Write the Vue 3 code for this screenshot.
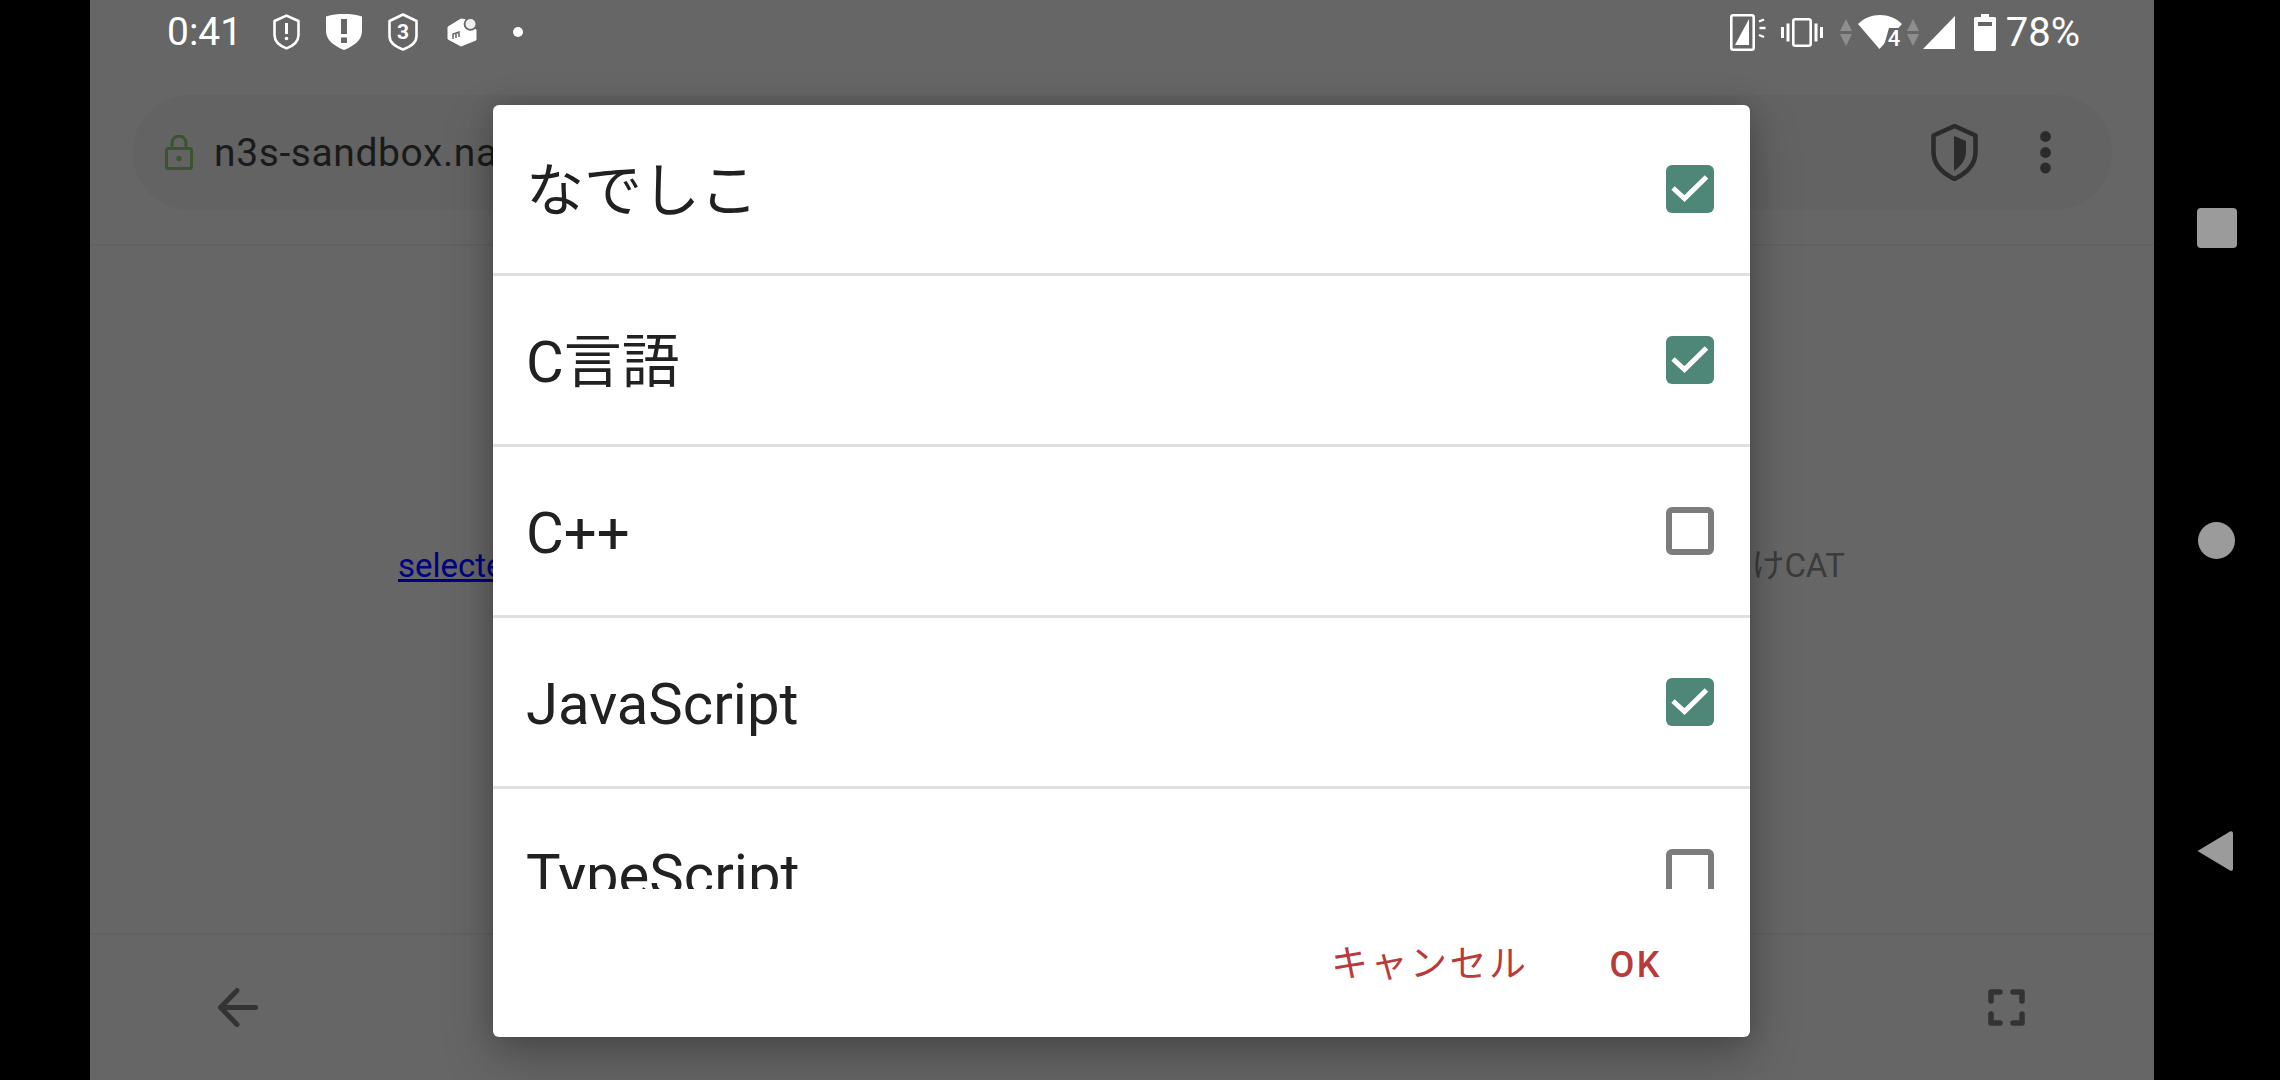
<template>
  <div class="device">
    <div class="screen">
      <header class="top">
        <div class="status">
          <span class="clock">0:41</span>
          <svg class="ic-time" width="27" height="36" viewBox="0 0 27 36">
            <path d="M13.5 1.6 25.5 7v14c0 6.5-5.2 10.8-12 13.4C6.700 31.800 1.500 27.500 1.500 21V7z" fill="none" stroke="#fff" stroke-width="2.600" stroke-linejoin="round" />
            <path d="M13.500 9v11" stroke="#fff" stroke-width="3" />
            <circle cx="13.500" cy="24.500" r="1.800" fill="#fff" />
          </svg>
          <svg width="36" height="36" viewBox="0 0 36 36">
            <path d="M0 2.500C6 .5 12 0 18 0s12 .5 18 2.500V17C36 26 28 32 18 36 8 32 0 26 0 17z" fill="#fff" />
            <path d="M15 5h6v15h-6zM15 23.500h6V29h-6z" fill="#666" />
          </svg>
          <svg width="30" height="38" viewBox="0 0 30 38">
            <path d="M15 1.500 28.500 8v15c0 6.500-6 10.800-13.500 13.500C7.500 33.800 1.500 29.500 1.500 23V8z" fill="none" stroke="#fff" stroke-width="2.600" stroke-linejoin="round" />
            <text x="15" y="26" text-anchor="middle" class="shield-num">3</text>
          </svg>
          <svg class="ic-merc" width="31" height="29" viewBox="0 0 31 29">
            <path d="M14 1 1 9v12l13 7 15-6V12L20 2z" fill="#fff" stroke="#fff" stroke-linejoin="round" />
            <circle cx="23.500" cy="6" r="6.800" fill="#666" />
            <circle cx="23.500" cy="6" r="5" fill="#eee" />
            <path d="M6 21v-5l3-1v5M9 15l3-1v5" fill="none" stroke="#666" stroke-width="1.500" />
          </svg>
          <span class="dot"></span>

          <div class="status-right">
            <svg width="38" height="37" viewBox="0 0 38 37">
              <rect x="1.300" y="1.300" width="22.400" height="34.400" rx="2" fill="none" stroke="#fff" stroke-width="2.600" />
              <path d="M19 5v26H5z" fill="#fff" />
              <path d="M29 7.500l5-2M29.500 14h6M29 21l5 2" stroke="#fff" stroke-width="2.400" fill="none" />
            </svg>
            <svg class="ic-vib" width="42" height="29" viewBox="0 0 42 29">
              <rect x="12.300" y="1.300" width="17.400" height="26.400" rx="2" fill="none" stroke="#fff" stroke-width="2.600" />
              <path d="M1.500 9v11M7 5.500v18M35 5.500v18M40.500 9v11" stroke="#fff" stroke-width="3" />
            </svg>
            <svg class="ic-arrows" width="12" height="27" viewBox="0 0 12 27">
              <path d="M6 0l6 12H0zM0 15h12L6 27z" fill="#8e8e8e" />
            </svg>
            <svg class="ic-wifi" width="44" height="34" viewBox="0 0 44 34">
              <path d="M0 9C6 3 14 0 22 0s16 3 22 9L21.500 34z" fill="#fff" />
              <path d="M31 13h13v21H25z" fill="#666" />
              <text x="36" y="31" text-anchor="middle" class="wifi-num">4</text>
            </svg>
            <svg class="ic-arrows" width="12" height="27" viewBox="0 0 12 27">
              <path d="M6 0l6 12H0zM0 15h12L6 27z" fill="#8e8e8e" />
            </svg>
            <svg class="ic-signal" width="32" height="33" viewBox="0 0 32 33">
              <path d="M32 0v33H0z" fill="#fff" />
            </svg>
            <svg class="ic-batt" width="22" height="37" viewBox="0 0 22 37">
              <path d="M7 0h8v3h5.500c.8 0 1.500.7 1.500 1.500V35.500c0 .8-.7 1.500-1.500 1.500H1.500C.7 37 0 36.300 0 35.500V4.500C0 3.700.7 3 1.500 3H7z" fill="#fff" />
              <path d="M4 8h14v4H4z" fill="#666" />
            </svg>
            <span class="percent">78%</span>
          </div>
        </div>

        <div class="address">
          <svg width="28" height="35" viewBox="0 0 28 35">
            <rect x="1.500" y="13.500" width="25" height="20" rx="2" fill="none" stroke="#3a552c" stroke-width="3" />
            <path d="M7 13V8a7 7 0 0 1 14 0v5" fill="none" stroke="#3a552c" stroke-width="3" />
            <circle cx="14" cy="23.500" r="2.700" fill="#3a552c" />
          </svg>
          <span class="url">n3s-sandbox.nadesi.com</span>
          <svg class="ic-shield" width="47" height="57" viewBox="0 0 47 57">
            <path d="M23.500 2 44.500 11.500V28c0 12-8.500 21-21 27C11 49 2.500 40 2.500 28V11.500z" fill="none" stroke="#2b2b2b" stroke-width="4.500" stroke-linejoin="round" />
            <path d="M23 12 35 17v10c0 9-5 15-12 20z" fill="#2b2b2b" />
          </svg>
          <svg width="11" height="43" viewBox="0 0 11 43">
            <circle cx="5.500" cy="5.500" r="5.400" fill="#2b2b2b" />
            <circle cx="5.500" cy="21.500" r="5.400" fill="#2b2b2b" />
            <circle cx="5.500" cy="37" r="5.400" fill="#2b2b2b" />
          </svg>
        </div>
      </header>

      <main class="content">
        <a class="link">selected</a>
        <span class="result">だけCAT</span>
      </main>

      <footer class="bottom">
        <svg width="40" height="39" viewBox="0 0 40 39">
          <path d="M37.500 19.500H3M19 2.500 2.500 19.500 19 36.500" fill="none" stroke="#333" stroke-width="5" stroke-linecap="round" stroke-linejoin="round" />
        </svg>
        <svg width="37" height="37" viewBox="0 0 37 37">
          <path d="M3 12V3h9M25 3h9v9M34 25v9h-9M12 34H3v-9" fill="none" stroke="#333" stroke-width="5.500" stroke-linecap="round" stroke-linejoin="round" />
        </svg>
      </footer>

      <section class="dialog">
        <div class="list">
          <div v-for="item in items" :key="item.name" class="row">
            <span class="label">{{ item.name }}</span>
            <span class="box" :class="{ checked: item.checked }">
              <svg v-if="item.checked" width="38" height="30" viewBox="0 0 38 30">
                <path d="M2 14 13.500 24.500 35.500 3" fill="none" stroke="#fff" stroke-width="5" />
              </svg>
            </span>
          </div>
        </div>
        <div class="actions">
          <button class="action cancel">キャンセル</button>
          <button class="action">OK</button>
        </div>
      </section>
    </div>

    <nav class="nav">
      <span class="nav-square"></span>
      <span class="nav-circle"></span>
      <svg width="37" height="42" viewBox="0 0 37 42">
        <path d="M1.500 21 34 1.500c1.500-.8 3 0 3 1.800v35.400c0 1.800-1.500 2.600-3 1.800z" fill="#9b9b9b" />
      </svg>
    </nav>
  </div>
</template>

<script setup>
const items = [
  { name: 'なでしこ', checked: true },
  { name: 'C言語', checked: true },
  { name: 'C++', checked: false },
  { name: 'JavaScript', checked: true },
  { name: 'TypeScript', checked: false },
]
</script>

<style>
body {
  background: #000;
}
</style>

<style scoped>
.device {
  width: 2280px;
  height: 1080px;
  display: flex;
  background: #000;
  padding-left: 90px;
  box-sizing: border-box;
  font-family: Roboto, "Noto Sans CJK JP", sans-serif;
  overflow: hidden;
}

.screen {
  position: relative;
  width: 2064px;
  display: flex;
  flex-direction: column;
  background: #666;
}

.top {
  height: 246px;
  box-sizing: border-box;
  border-bottom: 2px solid #616161;
}

.status {
  height: 64px;
  display: flex;
  align-items: center;
  gap: 26px;
  padding: 0 75px 0 77px;
  color: #fff;
}

.clock {
  font-size: 39px;
  margin-right: 5px;
}

.ic-merc {
  margin-left: 3px;
}

.dot {
  width: 10px;
  height: 10px;
  border-radius: 50%;
  background: #fff;
  margin-left: 9px;
}

.shield-num {
  font: 700 21px Roboto, sans-serif;
  fill: #fff;
}

.wifi-num {
  font: 500 22px Roboto, sans-serif;
  fill: #fff;
}

.status-right {
  margin-left: auto;
  display: flex;
  align-items: center;
}

.ic-vib {
  margin-left: 13px;
}

.ic-arrows {
  margin-left: 17px;
}

.ic-wifi {
  margin-left: 6px;
}

.ic-wifi + .ic-arrows {
  margin-left: 5px;
}

.ic-signal {
  margin-left: 4px;
}

.ic-batt {
  margin-left: 19px;
}

.percent {
  font-size: 40px;
  margin-left: 10px;
  margin-right: -1px;
}

.address {
  height: 115px;
  margin: 31px 42px 0 43px;
  padding: 0 61px 0 32px;
  display: flex;
  align-items: center;
  background: #636363;
  border-radius: 58px;
}

.url {
  margin-left: 21px;
  font-size: 39px;
  letter-spacing: 0.6px;
  color: #1a1a1a;
}

.ic-shield {
  margin-left: auto;
  margin-right: 62px;
}

.content {
  flex: 1;
  display: flex;
  justify-content: space-between;
  align-items: baseline;
  padding: 300px 309px 0 308px;
  font-size: 33px;
  line-height: 40px;
  color: #3b3b3b;
}

.link {
  color: #000080;
  text-decoration: underline;
}

.bottom {
  height: 147px;
  box-sizing: border-box;
  border-top: 2px solid #616161;
  padding: 0 129px 0 128px;
  display: flex;
  align-items: center;
  justify-content: space-between;
}

.dialog {
  position: absolute;
  left: 403px;
  top: 105px;
  width: 1257px;
  height: 932px;
  display: flex;
  flex-direction: column;
  background: #fff;
  border-radius: 6px;
  box-shadow: 0 20px 50px rgba(0, 0, 0, 0.25), 0 0 24px rgba(0, 0, 0, 0.16);
}

.list {
  height: 784px;
  overflow: hidden;
}

.row {
  height: 171px;
  box-sizing: border-box;
  border-bottom: 3px solid #e0e0e0;
  padding: 0 36px 0 33px;
  display: flex;
  align-items: center;
  justify-content: space-between;
}

.label {
  font-size: 58px;
  line-height: 70px;
  margin-top: 4px;
  color: #212121;
}

.box {
  width: 48px;
  height: 48px;
  box-sizing: border-box;
  border: 6px solid #7c7c7c;
  border-radius: 6px;
  display: flex;
  align-items: center;
  justify-content: center;
}

.box.checked {
  border: none;
  background: #4e8678;
}

.actions {
  flex: 1;
  display: flex;
  align-items: center;
  justify-content: flex-end;
  gap: 81px;
  padding: 3px 88px 0 0;
}

.action {
  padding: 0;
  border: none;
  background: none;
  font-family: Roboto, "Noto Sans CJK JP", sans-serif;
  font-size: 36px;
  line-height: 44px;
  font-weight: 500;
  letter-spacing: 2.500px;
  color: #b93a3a;
}

.cancel {
  font-size: 37px;
  font-weight: 400;
}

.nav {
  width: 126px;
  display: flex;
  flex-direction: column;
  align-items: center;
  padding-top: 208px;
}

.nav-square {
  width: 40px;
  height: 40px;
  margin-left: -1px;
  border-radius: 4px;
  background: #9b9b9b;
}

.nav-circle {
  width: 37px;
  height: 37px;
  margin-top: 274px;
  margin-left: -1px;
  margin-bottom: 271px;
  border-radius: 50%;
  background: #9b9b9b;
}

.nav svg {
  margin-left: -5px;
}
</style>
